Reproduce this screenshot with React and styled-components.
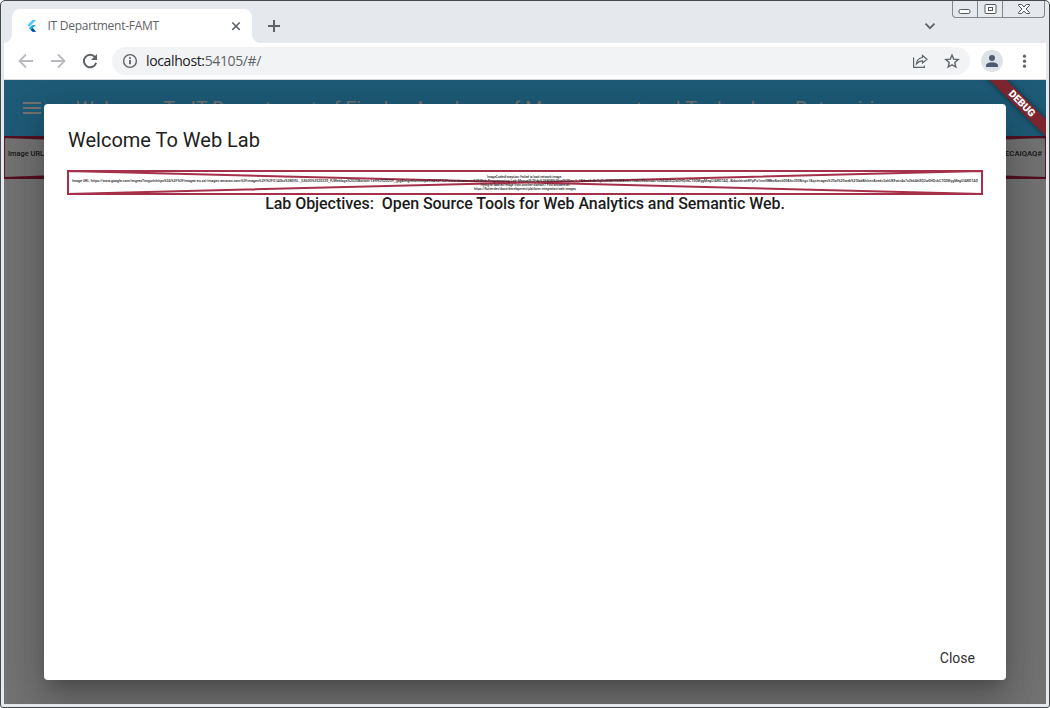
import React from "react";
import styled, { createGlobalStyle } from "styled-components";

const Global = createGlobalStyle`
  * { box-sizing: border-box; }
  body { margin: 0; overflow: hidden; font-family: Roboto, sans-serif; }
`;

const Window = styled.div`
  position: relative;
  width: 1050px;
  height: 708px;
  display: flex;
  flex-direction: column;
  padding: 0 3px 3px;
  background: #e5e9ed;
  border: 1px solid #47484c;
  border-radius: 5px 5px 3px 3px;
`;
const TabStrip = styled.div`
  height: 42px;
  flex: none;
  display: flex;
  padding: 8px 0 0 8px;
`;
const Tab = styled.div`
  position: relative;
  width: 240px;
  height: 34px;
  display: flex;
  align-items: center;
  padding: 0 10px 0 12px;
  background: #fff;
  border-radius: 8px 8px 0 0;
  &::before, &::after {
    content: "";
    position: absolute;
    bottom: 0;
    width: 8px;
    height: 8px;
  }
  &::before { left: -8px; background: radial-gradient(circle at 0 0, transparent 7.5px, #fff 8px); }
  &::after { right: -8px; background: radial-gradient(circle at 100% 0, transparent 7.5px, #fff 8px); }
`;
const TabTitle = styled.span`
  flex: 1;
  margin-left: 7.5px;
  margin-top: -2px;
  font: 12px "Open Sans", sans-serif;
  letter-spacing: -0.27px;
  color: #5f6368;
  white-space: nowrap;
`;
const NewTab = styled.div`
  margin: 10px 0 0 15px;
  line-height: 0;
`;
const TabSearch = styled.div`
  margin: 11px 110px 0 auto;
  line-height: 0;
`;
const WindowButtons = styled.div`
  position: absolute;
  top: 0;
  right: 4px;
  width: 93px;
  height: 17px;
  display: flex;
  border: 1px solid #85878b;
  border-top: 0;
  border-radius: 0 0 4px 4px;
`;
const WindowButton = styled.div`
  width: ${(p) => p.$w}px;
  display: flex;
  align-items: center;
  justify-content: center;
  & + & { border-left: 1px solid #85878b; }
`;
const Toolbar = styled.div`
  height: 37px;
  flex: none;
  display: flex;
  align-items: center;
  padding: 0 14px 0 14px;
  background: #fff;
  border-bottom: 1px solid #d5d8dc;
`;
const NavIcon = styled.div`
  width: 16px;
  height: 16px;
  margin-right: 16px;
  line-height: 0;
`;
const AddressBar = styled.div`
  width: 858px;
  height: 28px;
  margin-left: -2px;
  display: flex;
  align-items: center;
  padding: 0 10px;
  background: #f1f3f4;
  border-radius: 14px;
`;
const Url = styled.span`
  flex: 1;
  margin-left: 8px;
  margin-top: -1px;
  font: 14px "Open Sans", sans-serif;
  letter-spacing: -0.37px;
  color: #5f6368;
  b { font-weight: 400; color: #202124; }
`;
const BarIcon = styled.div`
  width: 16px;
  height: 16px;
  margin-left: 16px;
  line-height: 0;
`;
const Avatar = styled.div`
  width: 22px;
  height: 22px;
  margin-left: 11px;
  border-radius: 50%;
  background: #dee1e6;
  line-height: 0;
`;
const Menu = styled.div`
  margin: 0 0 0 auto;
  line-height: 0;
`;

const Page = styled.main`
  position: relative;
  flex: 1;
  overflow: hidden;
  background: #737373;
`;
const AppBar = styled.header`
  height: 56px;
  display: flex;
  align-items: center;
  padding-left: 19px;
  background: #1e5b77;
`;
const AppTitle = styled.h1`
  margin: 2px 0 0 35px;
  font-size: 20px;
  font-weight: 400;
  letter-spacing: -0.03px;
  white-space: nowrap;
  color: #737373;
`;
const BackBanner = styled.div`
  height: 43px;
  line-height: 0;
`;
const Ribbon = styled.div`
  position: absolute;
  top: 17px;
  right: -28px;
  width: 106px;
  height: 12px;
  transform: rotate(45deg);
  background: #7c252e;
  box-shadow: 0 0 6px rgba(0, 0, 0, 0.5);
  color: #fff;
  font-size: 10.2px;
  font-weight: 900;
  line-height: 12px;
  text-align: center;
  text-indent: 2px;
`;
const Dialog = styled.section`
  position: absolute;
  top: 24px;
  left: 40px;
  width: 962px;
  height: 576px;
  display: flex;
  flex-direction: column;
  padding: 24px 23px 8px;
  background: #fff;
  border-radius: 4px;
  box-shadow: 0 11px 15px -7px rgba(0, 0, 0, 0.2), 0 24px 38px 3px rgba(0, 0, 0, 0.14),
    0 9px 46px 8px rgba(0, 0, 0, 0.12);
`;
const DialogTitle = styled.h2`
  margin: 0 0 18px 1px;
  font-size: 20px;
  font-weight: 400;
  line-height: 24px;
  color: #212121;
`;
const ErrorImage = styled.div`
  height: 25px;
  line-height: 0;
  svg { overflow: visible; }
`;
const Objectives = styled.p`
  margin: -1px 0 0;
  flex: 1;
  text-align: center;
  font-size: 16px;
  font-weight: 500;
  line-height: 19px;
  letter-spacing: -0.05px;
  white-space: pre;
  color: #1c1c1c;
`;
const CloseButton = styled.button`
  align-self: flex-end;
  height: 28px;
  margin-right: 8px;
  padding: 0;
  border: 0;
  background: none;
  font: 14px Roboto, sans-serif;
  color: #303030;
`;

const URL_TEXT =
  "Image URL: https://www.google.com/imgres?imgurl=https%3A%2F%2Fimages-eu.ssl-images-amazon.com%2Fimages%2FI%2F51A0ks%2B0I5L._SX600%2520239_PJWeblogs%2520Bottom-Left%2520239_.jpg&imgrefurl=https%3A%2F%2Fwww.amazon.in%2FWeb-Programming-Lab-Manual%2Fdp%2FB08%2Fref%3Dsr_1_1&tbnid=8xTq2mNlMHVbM&vet=12ahUKEwiv4o7x2b6AhXQ2w0HQvhCT00MygMegUIARDTAQ..i&docid=ahRYpPu1nmNBBw&w=600&h=350&itg=1&q=images%20of%20web%20lab&hl=en&ved=2ahUKEwiv4o7x2b6AhXQ2w0HQvhCT00MygMegUIARDTAQ";

const FlutterLogo = () => (
  <svg width="16" height="16" viewBox="0 0 16 16">
    <path d="M8.600 2H12L5.300 8.700 3.400 7.300z" fill="#46c6fa" />
    <path d="M8.600 7H12L8.800 10.100 12 13.800H8.600L4.900 10.100z" fill="#28a6e5" />
    <path d="M8.800 10.100 12 13.800H8.600L6.700 12z" fill="#0d4f99" />
  </svg>
);

const ChromeLine = ({ w = 16, d, color = "#5f6368", width = 1.8 }) => (
  <svg width={w} height={w} viewBox={`0 0 ${w} ${w}`} fill="none" stroke={color} strokeWidth={width}>
    <path d={d} />
  </svg>
);

export default function App() {
  return (
    <>
      <Global />
      <Window>
        <TabStrip>
          <Tab>
            <FlutterLogo />
            <TabTitle>IT Department-FAMT</TabTitle>
            <ChromeLine w={12} d="M2.300 2.500l7.400 7.400M9.700 2.500l-7.400 7.400" width={1.600} />
          </Tab>
          <NewTab><ChromeLine w={14} d="M7 1v12M1 7h12" width={2} /></NewTab>
          <TabSearch><ChromeLine w={12} d="M1.500 3.700L6 8.200l4.500-4.500" /></TabSearch>
        </TabStrip>
        <WindowButtons>
          <WindowButton $w={24}>
            <svg width="13" height="16"><rect x="1" y="8.500" width="11" height="4" rx="1.500" fill="#fff" stroke="#55565a" /></svg>
          </WindowButton>
          <WindowButton $w={26}>
            <svg width="13" height="16"><g fill="#fff" stroke="#55565a"><rect x="1" y="3.500" width="11" height="9" rx="1" /><rect x="4.500" y="6.500" width="4" height="3" /></g></svg>
          </WindowButton>
          <WindowButton $w={42}>
            <svg width="14" height="16"><path d="M1.500 3.500h3.200L7 6l2.300-2.500h3.200v1L9 8l3.500 3.500v1H9.300L7 10l-2.300 2.500H1.500v-1L5 8 1.500 4.500z" fill="#fff" stroke="#55565a" /></svg>
          </WindowButton>
        </WindowButtons>
        <Toolbar>
          <NavIcon><ChromeLine d="M15 8H2M8 1.500L1.500 8 8 14.500" color="#b8babd" /></NavIcon>
          <NavIcon><ChromeLine d="M1 8h13M8 1.500L14.500 8 8 14.500" color="#b8babd" /></NavIcon>
          <NavIcon>
            <svg width="16" height="16" viewBox="0 0 16 16">
              <path d="M13 4.200A6.200 6.200 0 1 0 14.100 9.700" fill="none" stroke="#5f6368" strokeWidth="2" />
              <path d="M15 1v6H9z" fill="#5f6368" />
            </svg>
          </NavIcon>
          <AddressBar>
            <svg width="16" height="16" viewBox="0 0 16 16">
              <circle cx="8" cy="8" r="6.400" fill="none" stroke="#5f6368" strokeWidth="1.400" />
              <path d="M8 7v4.300M8 4.300v1.600" stroke="#5f6368" strokeWidth="1.800" />
            </svg>
            <Url><b>localhost:</b>54105/#/</Url>
            <BarIcon>
              <svg width="16" height="16" viewBox="0 0 16 16" fill="none" stroke="#5f6368" strokeWidth="1.200">
                <path d="M1.600 4.500v9.900h10.800v-2" />
                <path d="M10.500 2.500l4.500 3.700-4.500 3.700V7.800C7.700 7.800 5.900 9 4.400 10.900 4.700 7.400 6.800 5 10.500 4.500z" />
              </svg>
            </BarIcon>
            <BarIcon>
              <svg width="16" height="16" viewBox="0 0 16 16" fill="none" stroke="#5f6368" strokeWidth="1.400">
                <path d="M8 2l1.700 4.200 4.500.4-3.400 3 1 4.400L8 11.700 4.200 14l1-4.400-3.400-3 4.500-.4z" />
              </svg>
            </BarIcon>
          </AddressBar>
          <Avatar>
            <svg width="22" height="22" fill="#4d5a70"><circle cx="11" cy="8" r="3" /><path d="M5 17v-1.500C5 13.300 8.500 12.300 11 12.300s6 1 6 3.200V17z" /></svg>
          </Avatar>
          <Menu>
            <svg width="16" height="16" fill="#5f6368"><circle cx="8.500" cy="3.200" r="1.600" /><circle cx="8.500" cy="8.200" r="1.600" /><circle cx="8.500" cy="13.200" r="1.600" /></svg>
          </Menu>
        </Toolbar>
        <Page>
          <AppBar>
            <svg width="18" height="12" fill="#737373"><path d="M0 0h18v2H0zM0 5h18v2H0zM0 10h18v2H0z" /></svg>
            <AppTitle>Welcome To IT Department of Finolex Academy of Management and Technology, Ratnagiri</AppTitle>
          </AppBar>
          <BackBanner>
            <svg width="1042" height="43" stroke="#541020" fill="none">
              <path d="M0 1h1042v41H0zM0 1l1042 41M0 42L1042 1" strokeWidth="1.800" />
              <g fill="#151515" stroke="none" fontSize="7.400" fontWeight="500" fontFamily="Roboto, sans-serif">
                <text x="4" y="20" textLength="38" lengthAdjust="spacingAndGlyphs">Image URL:</text>
                <text x="1038" y="20" textAnchor="end" textLength="37" lengthAdjust="spacingAndGlyphs">ECAIQAQ#</text>
              </g>
            </svg>
          </BackBanner>
          <Dialog>
            <DialogTitle>Welcome To Web Lab</DialogTitle>
            <ErrorImage>
              <svg width="916" height="25" fill="none">
                <path d="M1 1h914v23H1zM1 1l914 23M1 24L915 1" stroke="#a5304a" strokeWidth="2" />
                <g fill="#1c1c1c" fontSize="3.600" fontWeight="500" fontFamily="Roboto, sans-serif">
                  <text x="420" y="8" textLength="75" lengthAdjust="spacingAndGlyphs">ImageCodecException: Failed to load network image.</text>
                  <text x="5" y="12.300" textLength="906" lengthAdjust="spacingAndGlyphs">{URL_TEXT}</text>
                  <text x="413" y="16" textLength="90" lengthAdjust="spacingAndGlyphs">Trying to load an image from another domain? Find answers at:</text>
                  <text x="407" y="19.500" textLength="102" lengthAdjust="spacingAndGlyphs">https://flutter.dev/docs/development/platform-integration/web-images</text>
                </g>
              </svg>
            </ErrorImage>
            <Objectives>{"Lab Objectives:  Open Source Tools for Web Analytics and Semantic Web."}</Objectives>
            <CloseButton>Close</CloseButton>
          </Dialog>
          <Ribbon>DEBUG</Ribbon>
        </Page>
      </Window>
    </>
  );
}
